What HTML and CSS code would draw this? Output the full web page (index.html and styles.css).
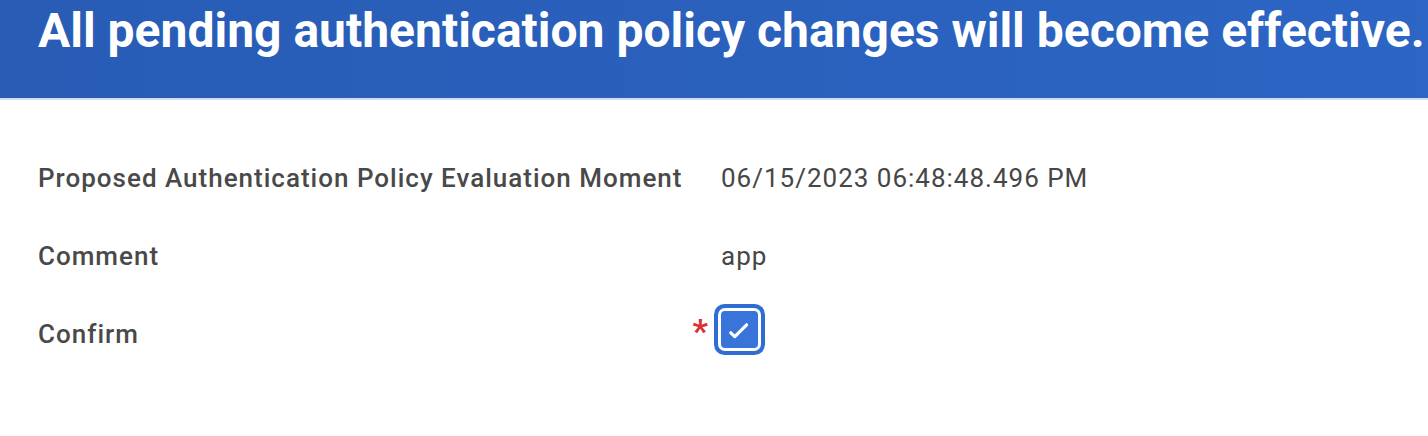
FILE: index.html
```html
<!DOCTYPE html>
<html lang="en">
<head>
<meta charset="utf-8">
<title>Authentication Policy</title>
<link rel="stylesheet" href="styles.css">
</head>
<body>
<header class="banner">
  <h1 class="banner-title">All pending authentication policy changes will become effective.</h1>
</header>
<main class="form">
  <div class="row">
    <div class="label">Proposed Authentication Policy Evaluation Moment</div>
    <div class="marker"></div>
    <div class="value">06/15/2023 06:48:48.496 PM</div>
  </div>
  <div class="row">
    <div class="label">Comment</div>
    <div class="marker"></div>
    <div class="value">app</div>
  </div>
  <div class="row">
    <div class="label">Confirm</div>
    <div class="marker"><span class="required">*</span></div>
    <div class="value value-check">
      <span class="checkbox" role="checkbox" aria-checked="true">
        <svg viewBox="0 0 37 37" width="37" height="37" aria-hidden="true">
          <path d="M9.8 21.8 L13.8 25.6 L25.6 13.8" fill="none" stroke="#ffffff" stroke-width="3.2" stroke-linecap="round" stroke-linejoin="round"/>
        </svg>
      </span>
    </div>
  </div>
</main>
</body>
</html>
```

FILE: styles.css
```css
* { box-sizing: border-box; }

html, body {
  margin: 0;
  padding: 0;
  background: #ffffff;
  font-family: Roboto, "Liberation Sans", Arial, sans-serif;
}

.banner {
  height: 100px;
  background: linear-gradient(90deg, #285cb5 0%, #2c65c4 100%);
  border-bottom: 2px solid #d3ddf0;
  padding: 0 0 0 38px;
  overflow: hidden;
}

.banner-title {
  margin: 0;
  color: #ffffff;
  font-size: 48px;
  font-weight: 700;
  line-height: 62px;
  white-space: nowrap;
}

.form {
  padding: 39px 0 0 38px;
}

.row {
  display: grid;
  grid-template-columns: 650px 33px 1fr;
  grid-template-rows: 78px;
  height: 78px;
  align-items: center;
  font-size: 26px;
  letter-spacing: 1px;
  line-height: 78px;
}

.label {
  color: #494949;
  font-weight: 500;
  white-space: nowrap;
}

.marker {
  align-self: start;
  text-align: right;
  padding-right: 13px;
  padding-top: 21px;
  letter-spacing: 0;
  line-height: 0;
}

.required {
  display: inline-block;
  color: #d93232;
  font-weight: 700;
  font-size: 34px;
  line-height: 30px;
  height: 30px;
}

.value {
  color: #464646;
  font-weight: 400;
  white-space: nowrap;
}

.value-check {
  display: flex;
  align-self: start;
  padding-top: 16px;
  line-height: 0;
}

.checkbox {
  display: block;
  width: 37px;
  height: 37px;
  background: #3874da;
  border-radius: 4px;
  box-shadow: 0 0 0 3px #ffffff, 0 0 0 7px #2f6dd4;
}

.checkbox svg {
  display: block;
}
```
